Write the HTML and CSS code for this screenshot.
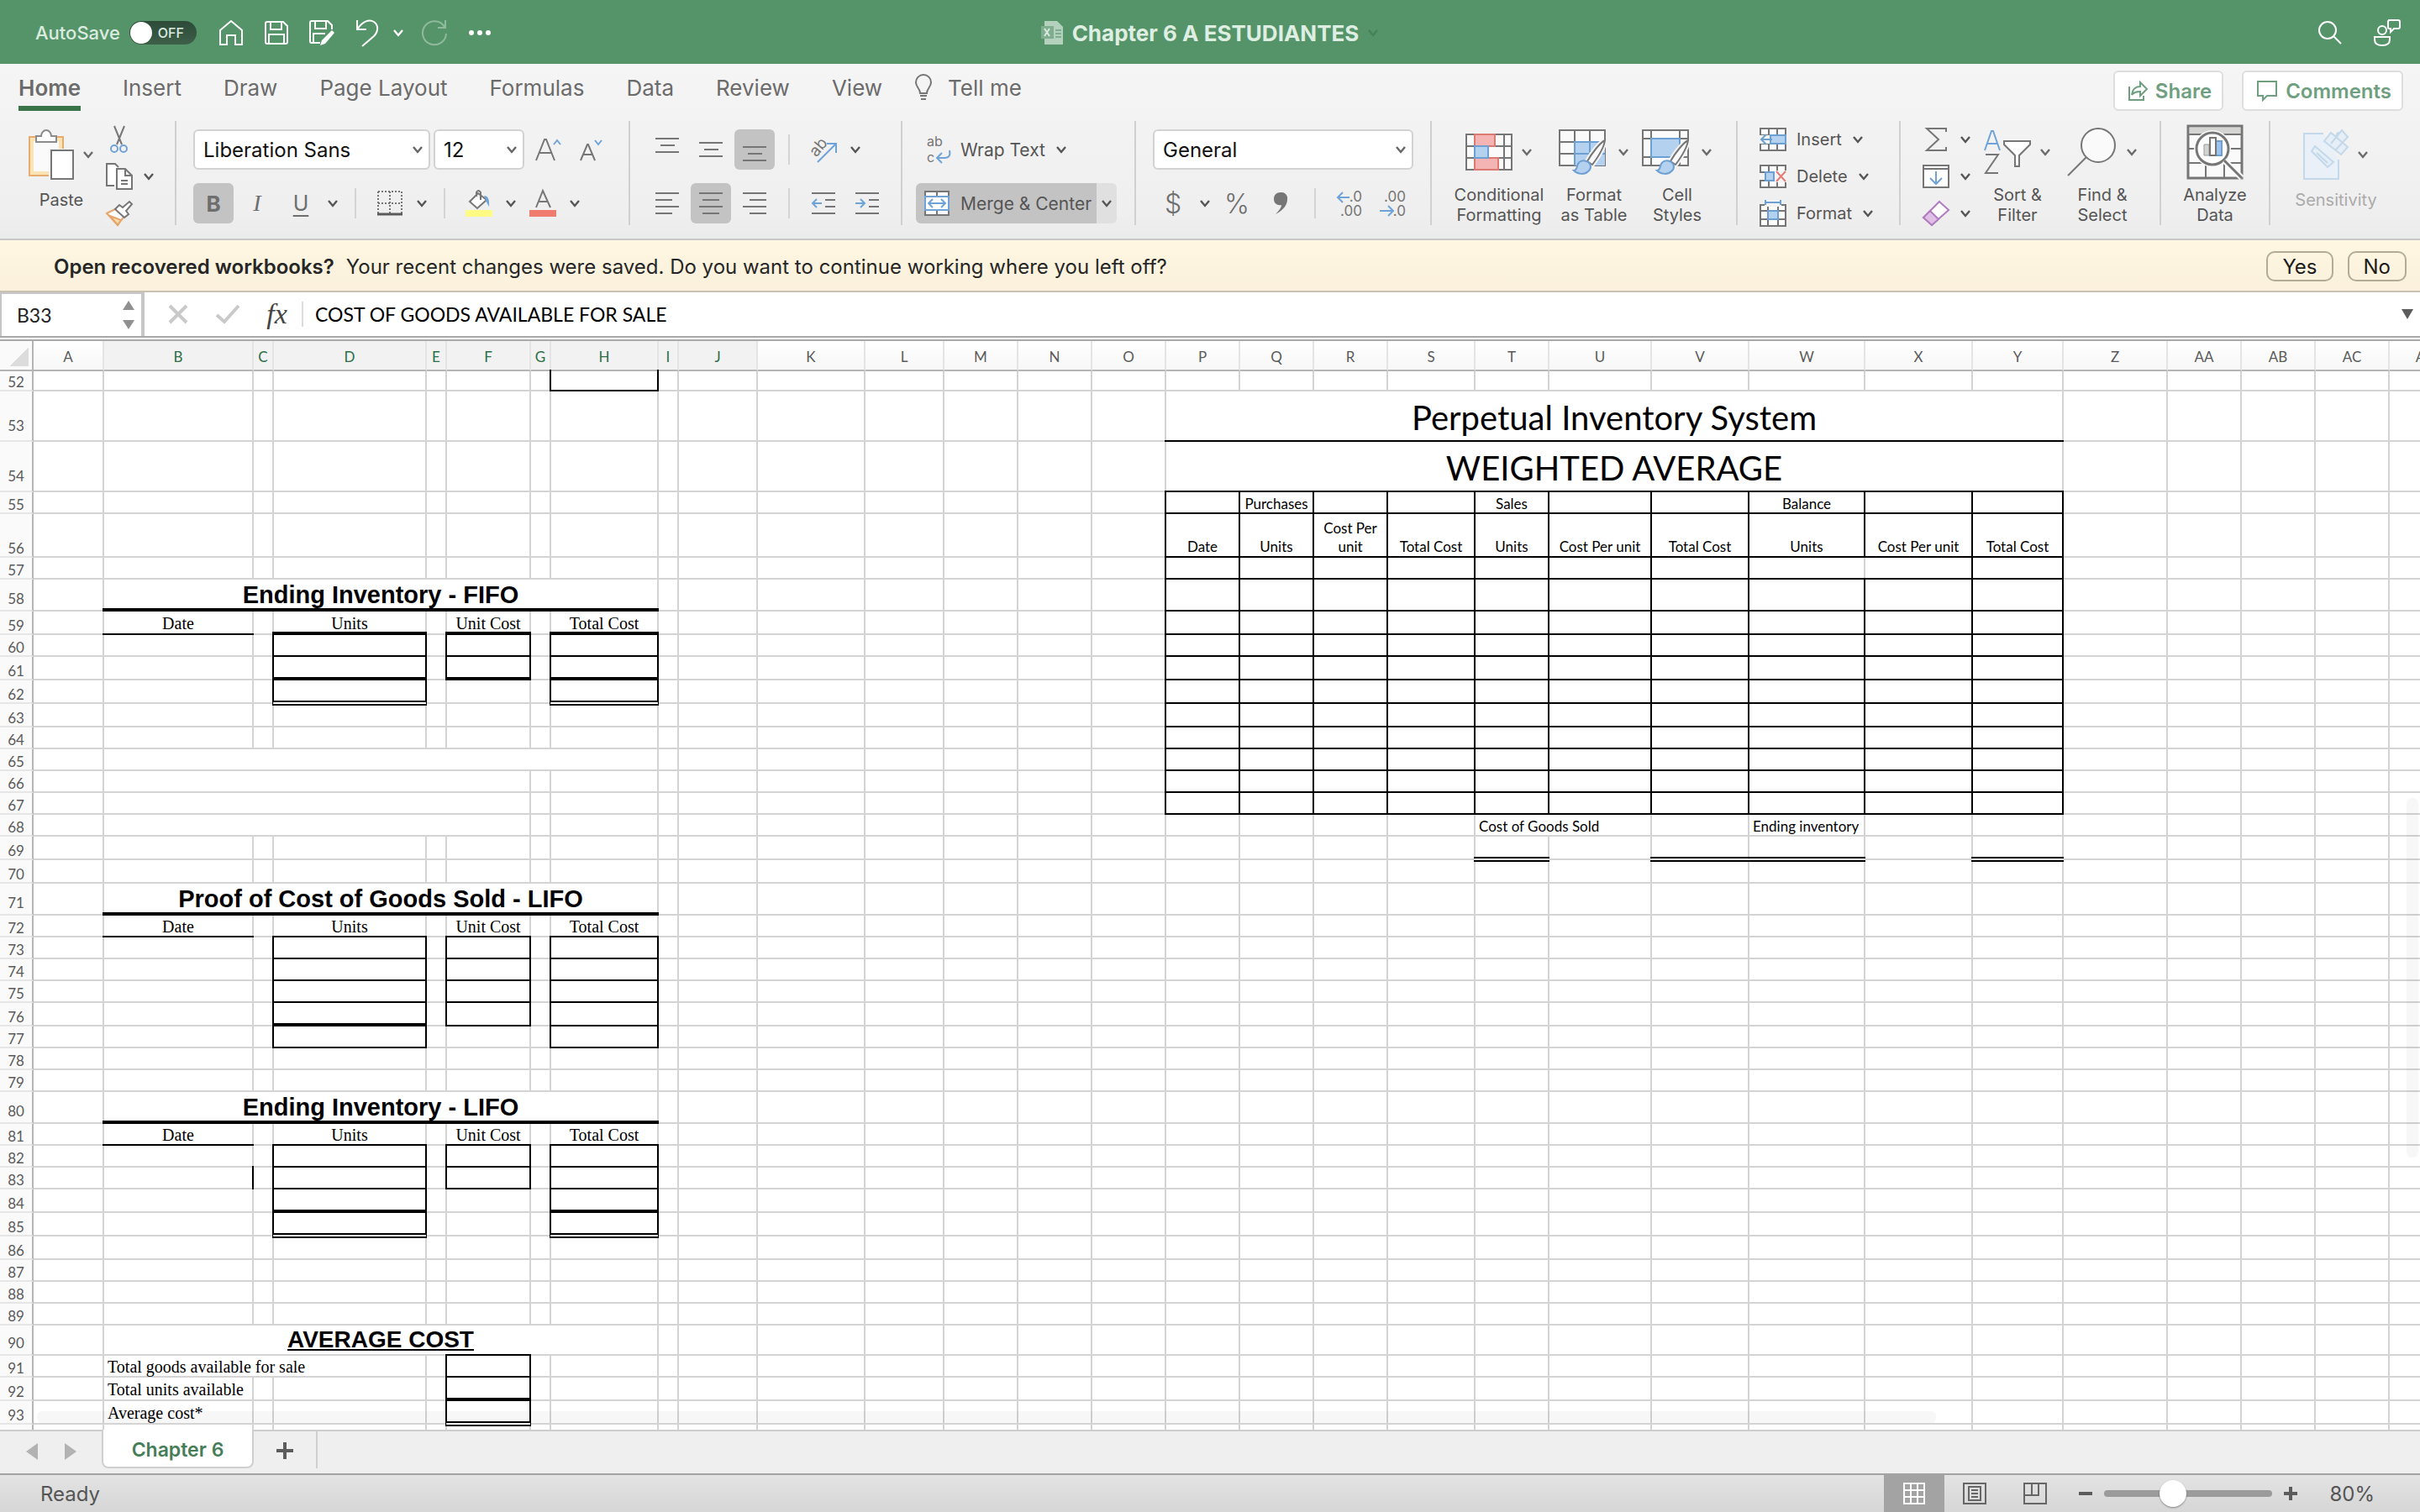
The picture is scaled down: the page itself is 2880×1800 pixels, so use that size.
FILE: index.html
```html
<!DOCTYPE html>
<html lang="en">
<head>
    <meta charset="UTF-8">
    <meta name="viewport" content="width=device-width, initial-scale=1.0">
    <title>Chapter 6 A ESTUDIANTES</title>
    <link rel="stylesheet" href="styles.css">
</head>
<body>
    <svg class="defs" aria-hidden="true">
        <symbol id="chev" viewBox="0 0 14 10"><path d="M2 2l5 6 5-6" fill="none" stroke="currentColor" stroke-width="2.4"/></symbol>
        <symbol id="brush" viewBox="0 0 40 42">
            <path d="M38 1c-6 3-16 16-21 25l6 4C29 22 37 9 38 1z" fill="#fafafa" stroke="#f4f4f4" stroke-width="6"/>
            <path d="M38 1c-6 3-16 16-21 25l6 4C29 22 37 9 38 1z" fill="#fafafa" stroke="#767676" stroke-width="2"/>
            <path d="M1 37c4 0 3-4 5-8 2-4 8-5 12-2s4 8 0 11c-4 4-12 4-17-1z" fill="#b4d2f0" stroke="#6c9fd2" stroke-width="2"/>
        </symbol>
    </svg>

    <header class="titlebar">
        <div class="quick">
            <label class="autosave" for="autosave">AutoSave
                <span class="switch"><input type="checkbox" id="autosave"><span class="switch-text">OFF</span></span>
            </label>
            <button class="qbtn" aria-label="Home"><svg width="30" height="32" viewBox="0 0 30 32"><path d="M2 13L15 2l13 11v17h-8V19h-10v11H2z"/></svg></button>
            <button class="qbtn" aria-label="Save"><svg width="30" height="30" viewBox="0 0 30 30"><path d="M2 4q0-2 2-2h19l5 5v19q0 2-2 2H4q-2 0-2-2zM8 2v9h13V2M6 28V17h18v11"/></svg></button>
            <button class="qbtn" aria-label="Save as"><svg width="32" height="32" viewBox="0 0 32 32"><path d="M14 28H4q-2 0-2-2V4q0-2 2-2h19l5 5v5M8 2v9h13V2M6 28V17h14"/><path class="solid" d="M28 13l3 3-11 13-6 2 2-6z"/></svg></button>
            <button class="qbtn" aria-label="Undo"><svg width="28" height="34" viewBox="0 0 28 34"><path d="M2 2v11h11M2 13C8 4 16 0 22 4s5 12 0 17L8 33"/></svg></button>
            <button class="qchev" aria-label="Undo history"><svg width="14" height="10"><use href="#chev"/></svg></button>
            <button class="qbtn faded" aria-label="Redo"><svg width="32" height="34" viewBox="0 0 32 34"><path d="M29 2v9h-9M28 10A14 14 0 1 0 30 18"/></svg></button>
            <button class="qbtn" aria-label="More"><svg width="28" height="8" viewBox="0 0 28 8"><path class="solid" d="M1 4a3 3 0 1 1 6 0 3 3 0 1 1-6 0M11 4a3 3 0 1 1 6 0 3 3 0 1 1-6 0M21 4a3 3 0 1 1 6 0 3 3 0 1 1-6 0"/></svg></button>
        </div>
        <div class="doc-title">
            <svg width="27" height="30" viewBox="0 0 27 30"><path d="M4 1h15l7 7v21H4z" fill="#b4d1bd"/><path d="M0 7h15v15H0z" fill="#7fae8e"/><path d="M4 10l6 9M10 10l-6 9" stroke="#d8e8dd" stroke-width="2"/><path d="M17 12h7M17 16h7M17 20h7" stroke="#7fae8e" stroke-width="2"/></svg>
            <span>Chapter 6 A ESTUDIANTES</span>
            <svg class="title-chev" width="14" height="10"><use href="#chev"/></svg>
        </div>
        <div class="title-right">
            <button class="qbtn" aria-label="Search"><svg width="30" height="30" viewBox="0 0 30 30"><circle cx="12" cy="12" r="10"/><path d="M19 19l9 9"/></svg></button>
            <button class="qbtn" aria-label="Share presence"><svg width="34" height="34" viewBox="0 0 34 34"><circle cx="11" cy="14" r="5"/><path d="M2 22h18v3q0 7-9 7t-9-7zM18 2h12q2 0 2 2v6q0 2-2 2h-5l-4 4v-4h-2q-1 0-1-2V4q0-2 2-2z"/></svg></button>
        </div>
    </header>

    <section class="ribbon">
        <nav class="tabs">
            <div class="tab-list">
                <button class="tab active">Home</button>
                <button class="tab">Insert</button>
                <button class="tab">Draw</button>
                <button class="tab">Page Layout</button>
                <button class="tab">Formulas</button>
                <button class="tab">Data</button>
                <button class="tab">Review</button>
                <button class="tab">View</button>
                <button class="tab tell"><svg width="22" height="32" viewBox="0 0 22 32"><path d="M7 23C7 17 2 16 2 10a9 9 0 0 1 18 0c0 6-5 7-5 13zM7 26h8M8 30h6" fill="none" stroke="#767676" stroke-width="2"/></svg>Tell me</button>
            </div>
            <div class="tab-actions">
                <button class="pill"><svg width="24" height="26" viewBox="0 0 24 26"><path d="M2 8v16h17v-5M5 18c1-7 5-10 10-10V3l8 8-8 8v-5c-5 0-8 1-10 4z"/></svg>Share</button>
                <button class="pill"><svg width="26" height="26" viewBox="0 0 26 26"><path d="M2 2h22v17H13l-5 5v-5H2z"/></svg>Comments</button>
            </div>
        </nav>

        <div class="toolbar">
            <div class="group g-clip">
                <button class="big">
                    <span class="big-icon">
                        <svg width="54" height="60" viewBox="0 0 54 60"><path d="M1 9h40v46H1z" fill="#fbe3b6" stroke="#e6ac70" stroke-width="2"/><path d="M6 14h30v36H6z" fill="#fafafa"/><path d="M9 15V8h6a6 7 0 0 1 12 0h6v7z" fill="#fff" stroke="#8b8b8b" stroke-width="2"/><path d="M24 23h32v38H24z" fill="#f3f3f3"/><path d="M27 25h26v34H27z" fill="#fff" stroke="#767676" stroke-width="2"/></svg>
                        <svg width="14" height="10"><use href="#chev"/></svg>
                    </span>
                    <span>Paste</span>
                </button>
                <div class="stack">
                    <button class="mini" aria-label="Cut"><svg width="32" height="32" viewBox="0 0 32 32"><path d="M10 0l9 22M22 0l-9 22" fill="none" stroke="#767676" stroke-width="2"/><circle cx="10" cy="27" r="4" fill="none" stroke="#6fa3d8" stroke-width="2"/><circle cx="21" cy="27" r="4" fill="none" stroke="#6fa3d8" stroke-width="2"/></svg></button>
                    <button class="mini" aria-label="Copy"><svg width="32" height="32" viewBox="0 0 32 32"><path d="M10 27H1V1h10l4 4" fill="#fff" stroke="#767676" stroke-width="2"/><path d="M13 7h10l8 8v16H13zM23 7v8h8M18 21h8M18 25h8" fill="#fff" stroke="#767676" stroke-width="2"/></svg><svg width="14" height="10"><use href="#chev"/></svg></button>
                    <button class="mini" aria-label="Format painter"><svg width="32" height="30" viewBox="0 0 32 30"><path d="M1 15l12-6 9 9-8 11z" fill="#fff" stroke="#e6a56a" stroke-width="2"/><path d="M5 18l13 5-4 6z" fill="#fbdca8" stroke="#e6a56a" stroke-width="2"/><path d="M11 10l5-5 4 3 8-7 3 3-7 8 3 4-5 4z" fill="#fff" stroke="#767676" stroke-width="2"/></svg></button>
                </div>
            </div>

            <div class="group g-font rows">
                <div class="row">
                    <select class="font-name" aria-label="Font"><option>Liberation Sans</option></select>
                    <select class="font-size" aria-label="Font size"><option>12</option></select>
                    <button class="tool" aria-label="Increase font size"><svg width="30" height="28" viewBox="0 0 30 28"><path d="M1 27L11 2h2l10 25M5 18h14" fill="none" stroke="#767676" stroke-width="2"/><path d="M22 8l4-5 4 5" fill="none" stroke="#6fa3d8" stroke-width="2"/></svg></button>
                    <button class="tool" aria-label="Decrease font size"><svg width="28" height="28" viewBox="0 0 28 28"><path d="M1 27L9 8h1l8 19M4 20h11" fill="none" stroke="#767676" stroke-width="2"/><path d="M18 3l4 5 4-5" fill="none" stroke="#6fa3d8" stroke-width="2"/></svg></button>
                </div>
                <div class="row">
                    <button class="tool on bold">B</button>
                    <button class="tool italic">I</button>
                    <button class="tool underline">U</button>
                    <button class="chev" aria-label="Underline style"><svg width="14" height="10"><use href="#chev"/></svg></button>
                    <i class="sep"></i>
                    <button class="tool" aria-label="Borders"><svg width="30" height="30" viewBox="0 0 30 30"><path d="M1 1h28M1 15h28M1 1v26M15 1v26M29 1v26" fill="none" stroke="#767676" stroke-width="2" stroke-dasharray="2 2"/><path d="M0 28h30" stroke="#5a5a5a" stroke-width="3"/></svg></button>
                    <button class="chev" aria-label="Border style"><svg width="14" height="10"><use href="#chev"/></svg></button>
                    <i class="sep"></i>
                    <button class="tool" aria-label="Fill color"><svg width="32" height="32" viewBox="0 0 32 32"><path d="M0 24h32v8H0z" fill="#fefb84"/><path d="M15 4L5 14l9 8 11-10zM13 8V3q2-4 5 0v9" fill="#fff" stroke="#767676" stroke-width="2"/><path d="M22 7q7 0 6 13-3-5-4-8z" fill="#6fa3d8"/></svg></button>
                    <button class="chev" aria-label="Fill colors"><svg width="14" height="10"><use href="#chev"/></svg></button>
                    <button class="tool" aria-label="Font color"><svg width="32" height="32" viewBox="0 0 32 32"><path d="M0 24h32v8H0z" fill="#f07c70"/><path d="M8 21L16 1l9 20M11 14h11" fill="none" stroke="#767676" stroke-width="2"/></svg></button>
                    <button class="chev" aria-label="Font colors"><svg width="14" height="10"><use href="#chev"/></svg></button>
                </div>
            </div>

            <div class="group g-align rows">
                <div class="row">
                    <button class="tool" aria-label="Top align"><svg class="ln" width="28" height="28" viewBox="0 0 28 28"><path d="M0 1h28M6 9h17M0 17h28"/></svg></button>
                    <button class="tool" aria-label="Middle align"><svg class="ln" width="28" height="28" viewBox="0 0 28 28"><path d="M0 6h28M6 14h17M0 22h28"/></svg></button>
                    <button class="tool on" aria-label="Bottom align"><svg class="ln" width="28" height="28" viewBox="0 0 28 28"><path d="M0 11h28M6 19h17M0 27h28"/></svg></button>
                    <i class="sep"></i>
                    <button class="tool" aria-label="Orientation"><svg width="34" height="32" viewBox="0 0 34 32"><text x="4" y="24" transform="rotate(-50 8 20)" font-family="Inter" font-size="19" fill="#767676">ab</text><path d="M10 31L31 10M21 9h11v11" fill="none" stroke="#6fa3d8" stroke-width="2"/></svg></button>
                    <button class="chev" aria-label="Orientation options"><svg width="14" height="10"><use href="#chev"/></svg></button>
                </div>
                <div class="row">
                    <button class="tool" aria-label="Align left"><svg class="ln" width="28" height="28" viewBox="0 0 28 28"><path d="M0 2h28M0 10h20M0 18h28M0 26h20"/></svg></button>
                    <button class="tool on" aria-label="Center"><svg class="ln" width="28" height="28" viewBox="0 0 28 28"><path d="M0 2h28M4 10h20M0 18h28M4 26h20"/></svg></button>
                    <button class="tool" aria-label="Align right"><svg class="ln" width="28" height="28" viewBox="0 0 28 28"><path d="M0 2h28M8 10h20M0 18h28M8 26h20"/></svg></button>
                    <i class="sep"></i>
                    <button class="tool" aria-label="Decrease indent"><svg class="ln" width="28" height="28" viewBox="0 0 28 28"><path d="M0 2h28M16 10h12M16 18h12M0 26h28"/><path class="blue" d="M12 14H1M6 9l-5 5 5 5"/></svg></button>
                    <button class="tool" aria-label="Increase indent"><svg class="ln" width="28" height="28" viewBox="0 0 28 28"><path d="M0 2h28M16 10h12M16 18h12M0 26h28"/><path class="blue" d="M0 14h11M6 9l5 5-5 5"/></svg></button>
                </div>
            </div>

            <div class="group g-wrap rows">
                <div class="row tight">
                    <button class="tool wide"><svg width="32" height="32" viewBox="0 0 32 32"><text font-family="Inter" font-size="16" fill="#767676"><tspan x="4" y="12">ab</tspan><tspan x="4" y="31">c</tspan></text><path d="M31 17q2 9-6 9H17M22 20l-6 6 6 6" fill="none" stroke="#6fa3d8" stroke-width="2"/></svg>Wrap Text<svg width="14" height="10"><use href="#chev"/></svg></button>
                </div>
                <div class="row tight">
                    <button class="tool wide on merge"><svg width="32" height="32" viewBox="0 0 32 32"><path d="M2 2h28v28H2zM16 2v6M16 24v6" fill="#fafafa" stroke="#767676" stroke-width="2"/><path d="M2 8h28v16H2z" fill="#fff" stroke="#6fa3d8" stroke-width="2"/><path d="M6 16h20M11 11l-5 5 5 5M21 11l5 5-5 5" fill="none" stroke="#6fa3d8" stroke-width="2"/></svg>Merge &amp; Center</button>
                    <button class="chev merge-chev" aria-label="Merge options"><svg width="14" height="10"><use href="#chev"/></svg></button>
                </div>
            </div>

            <div class="group g-num rows">
                <div class="row">
                    <select class="num-format" aria-label="Number format"><option>General</option></select>
                </div>
                <div class="row">
                    <button class="tool sign">$</button>
                    <button class="chev" aria-label="Currency"><svg width="14" height="10"><use href="#chev"/></svg></button>
                    <button class="tool sign">%</button>
                    <button class="tool" aria-label="Comma style"><svg width="16" height="26" viewBox="0 0 16 26"><path d="M8 0a7 7 0 0 1 8 8c0 8-6 14-14 18 4-4 7-8 7-11-5 1-9-2-9-7 0-5 3-8 8-8z" fill="#767676"/></svg></button>
                    <i class="sep"></i>
                    <button class="tool" aria-label="Increase decimal"><svg width="32" height="32" viewBox="0 0 32 32"><text text-anchor="end" font-family="Inter" font-size="17" fill="#767676"><tspan x="31" y="14">.0</tspan><tspan x="31" y="31">.00</tspan></text><path d="M16 9H2M8 3L2 9l6 6" fill="none" stroke="#6fa3d8" stroke-width="2"/></svg></button>
                    <button class="tool" aria-label="Decrease decimal"><svg width="32" height="32" viewBox="0 0 32 32"><text text-anchor="end" font-family="Inter" font-size="17" fill="#767676"><tspan x="31" y="14">.00</tspan><tspan x="31" y="31">.0</tspan></text><path d="M0 25h16M10 19l6 6-6 6" fill="none" stroke="#6fa3d8" stroke-width="2"/></svg></button>
                </div>
            </div>

            <div class="group g-styles">
                <button class="big w120">
                    <span class="big-icon">
                        <svg width="56" height="44" viewBox="0 0 56 44"><path d="M1 1h54v42H1zM1 15h54M1 29h54M11 1v42M46 1v42" fill="#fafafa" stroke="#767676" stroke-width="2"/><path d="M11 1h24v14H11zM11 29h28v14H11z" fill="#f5b4b4" stroke="#dc7a72" stroke-width="2"/><path d="M11 15h16v14H11z" fill="#b4d2f0" stroke="#6c9fd2" stroke-width="2"/></svg>
                        <svg width="14" height="10"><use href="#chev"/></svg>
                    </span>
                    <span>Conditional<br>Formatting</span>
                </button>
                <button class="big w106">
                    <span class="big-icon">
                        <svg width="60" height="54" viewBox="0 0 60 54"><path d="M1 1h54v42H1z" fill="#fafafa" stroke="#767676" stroke-width="2"/><path d="M19 15h36v28H19z" fill="#b4d2f0"/><path d="M1 15h18M1 29h18M19 1v14M37 1v14" stroke="#767676" stroke-width="2"/><path d="M19 43V15h36M19 29h36M37 15v28" fill="none" stroke="#6c9fd2" stroke-width="2"/><svg x="15" y="12" width="44" height="42"><use href="#brush"/></svg></svg>
                        <svg width="14" height="10"><use href="#chev"/></svg>
                    </span>
                    <span>Format<br>as Table</span>
                </button>
                <button class="big w92">
                    <span class="big-icon">
                        <svg width="60" height="54" viewBox="0 0 60 54"><path d="M1 1h54v42H1z" fill="#fafafa" stroke="#767676" stroke-width="2"/><path d="M1 11h54M1 33h54M11 1v42M45 1v42" stroke="#767676" stroke-width="2"/><path d="M11 11h34v22H11z" fill="#b4d2f0" stroke="#6c9fd2" stroke-width="2"/><svg x="15" y="12" width="44" height="42"><use href="#brush"/></svg></svg>
                        <svg width="14" height="10"><use href="#chev"/></svg>
                    </span>
                    <span>Cell<br>Styles</span>
                </button>
            </div>

            <div class="group g-cells">
                <div class="stack">
                    <button class="mini"><svg width="32" height="28" viewBox="0 0 32 28"><path d="M1 1h30v26H1zM1 9h30M1 19h30M11 1v26M21 1v26" fill="#fff" stroke="#767676" stroke-width="2"/><path d="M0 9h16v10H0z" fill="#f4f4f4"/><path d="M13 9h18v10H13z" fill="#b4d2f0" stroke="#6c9fd2" stroke-width="2"/><path d="M15 14H2M8 8l-6 6 6 6" fill="none" stroke="#6c9fd2" stroke-width="2"/></svg>Insert<svg width="14" height="10"><use href="#chev"/></svg></button>
                    <button class="mini"><svg width="32" height="28" viewBox="0 0 32 28"><path d="M1 1h30v26H1zM1 9h30M1 19h30M11 1v26M21 1v26" fill="#fff" stroke="#767676" stroke-width="2"/><path d="M0 10h7v8H0zM17 7h16v14H17z" fill="#f4f4f4"/><path d="M7 9h10v10H7z" fill="#b4d2f0" stroke="#6c9fd2" stroke-width="2"/><path d="M20 8l11 12M31 8L20 20" fill="none" stroke="#e37b76" stroke-width="2"/></svg>Delete<svg width="14" height="10"><use href="#chev"/></svg></button>
                    <button class="mini"><svg width="32" height="32" viewBox="0 0 32 32"><path d="M1 6h30v25H1zM1 13h30M1 23h30M10 6v25M22 6v25" fill="#fff" stroke="#767676" stroke-width="2"/><path d="M6 0h20v8H6z" fill="#f4f4f4"/><path d="M10 13h12v10H10z" fill="#b4d2f0" stroke="#6c9fd2" stroke-width="2"/><path d="M7 3h18M7 0v6M25 0v6" fill="none" stroke="#6c9fd2" stroke-width="2"/></svg>Format<svg width="14" height="10"><use href="#chev"/></svg></button>
                </div>
            </div>

            <div class="group g-edit">
                <div class="stack">
                    <button class="mini" aria-label="AutoSum"><svg width="32" height="28" viewBox="0 0 32 28"><path d="M28 5V1H5l14 13L5 27h23v-4" fill="none" stroke="#767676" stroke-width="2"/></svg><svg width="14" height="10"><use href="#chev"/></svg></button>
                    <button class="mini" aria-label="Fill"><svg width="32" height="28" viewBox="0 0 32 28"><path d="M1 1h30v26H1zM1 5h30" fill="#fff" stroke="#767676" stroke-width="2"/><path d="M16 8v14M9 16l7 7 7-7" fill="none" stroke="#6fa3d8" stroke-width="2"/></svg><svg width="14" height="10"><use href="#chev"/></svg></button>
                    <button class="mini" aria-label="Clear"><svg width="32" height="30" viewBox="0 0 32 30"><path d="M20 1l11 10-20 18L1 20z" fill="#fff" stroke="#b07cc0" stroke-width="2"/><path d="M9 12l10 10-8 7L1 20z" fill="#dfbfe6" stroke="#b07cc0" stroke-width="2"/></svg><svg width="14" height="10"><use href="#chev"/></svg></button>
                </div>
                <button class="big w106">
                    <span class="big-icon">
                        <svg width="56" height="54" viewBox="0 0 56 54"><path d="M1 25L9 2h2l8 23M4 17h12" fill="none" stroke="#6fa3d8" stroke-width="2"/><path d="M2 30h15L2 52h15" fill="none" stroke="#767676" stroke-width="2"/><path d="M24 14h31v4L42 31v13h-5V31L24 18z" fill="#fff" stroke="#767676" stroke-width="2"/></svg>
                        <svg width="14" height="10"><use href="#chev"/></svg>
                    </span>
                    <span>Sort &amp;<br>Filter</span>
                </button>
                <button class="big w92">
                    <span class="big-icon">
                        <svg width="60" height="58" viewBox="0 0 60 58"><circle cx="37" cy="21" r="20" fill="#fafafa" stroke="#767676" stroke-width="2"/><path d="M23 35L1 57" stroke="#767676" stroke-width="2"/></svg>
                        <svg width="14" height="10"><use href="#chev"/></svg>
                    </span>
                    <span>Find &amp;<br>Select</span>
                </button>
            </div>

            <div class="group g-data">
                <button class="big">
                    <span class="big-icon">
                        <svg width="66" height="64" viewBox="0 0 66 64"><path d="M1 1h64v62H1z" fill="#fafafa" stroke="#767676" stroke-width="3"/><path d="M3 3h60v8H3z" fill="#d4d4d2"/><path d="M1 11h64M1 28h64M1 45h64M22 45v18M44 45v18" stroke="#767676" stroke-width="2"/><circle cx="30" cy="28" r="22" fill="#fafafa"/><circle cx="30" cy="28" r="19" fill="#fff" stroke="#767676" stroke-width="3"/><path d="M20 23h6v13h-6z" fill="#d4d4d2" stroke="#999"/><path d="M34 19h7v17h-7z" fill="#9cc4ee" stroke="#6c9fd2" stroke-width="2"/><path d="M27 15h7v21h-7z" fill="#fff" stroke="#767676" stroke-width="2"/><path d="M44 42l21 21" stroke="#fafafa" stroke-width="7"/><path d="M44 42l21 21" stroke="#767676" stroke-width="3"/></svg>
                    </span>
                    <span>Analyze<br>Data</span>
                </button>
            </div>

            <div class="group g-sens">
                <button class="big" disabled>
                    <span class="big-icon">
                        <svg width="54" height="60" viewBox="0 0 54 60"><path d="M24 5H1v54h41V36" fill="#e9f0f7" stroke="#c3d8ea" stroke-width="2"/><path d="M10 26l4-6 22 19-7 6zM16 28l13 12M25 14l8-10 20 17-8 9zM33 17L46 1l7 8-14 15M42 3l-4 6" fill="#e6eef6" stroke="#c3d8ea" stroke-width="2"/></svg>
                        <svg width="14" height="10"><use href="#chev"/></svg>
                    </span>
                    <span>Sensitivity</span>
                </button>
            </div>
        </div>
    </section>

    <div class="message">
        <strong>Open recovered workbooks?</strong>
        <span>Your recent changes were saved. Do you want to continue working where you left off?</span>
        <div class="message-actions">
            <button>Yes</button>
            <button>No</button>
        </div>
    </div>

    <div class="formula-bar">
        <div class="name-box">
            <input type="text" value="B33" aria-label="Name box">
            <svg width="14" height="34" viewBox="0 0 14 34"><path d="M7 0l7 11H0zM7 34l7-11H0z" fill="#909090"/></svg>
        </div>
        <button class="fbtn" aria-label="Cancel"><svg width="24" height="24" viewBox="0 0 24 24"><path d="M2 2l20 20M22 2L2 22" stroke="#c9c9c9" stroke-width="4"/></svg></button>
        <button class="fbtn" aria-label="Enter"><svg width="30" height="24" viewBox="0 0 30 24"><path d="M2 13l9 8L28 2" fill="none" stroke="#c9c9c9" stroke-width="4"/></svg></button>
        <button class="fbtn fx">fx</button>
        <input class="formula" type="text" value="COST OF GOODS AVAILABLE FOR SALE" aria-label="Formula">
        <button class="expand" aria-label="Expand formula bar"><svg width="14" height="12" viewBox="0 0 14 12"><path d="M0 0h14L7 12z" fill="#5c5c5c"/></svg></button>
    </div>

    <main class="sheet">
        <table id="grid" class="grid"></table>
        <div class="scroll-v"></div>
        <div class="scroll-h"></div>
    </main>

    <div class="sheet-tabs">
        <div class="arrows">
            <button aria-label="Previous sheet"><svg width="14" height="20" viewBox="0 0 14 20"><path d="M14 0v20L0 10z"/></svg></button>
            <button aria-label="Next sheet"><svg width="14" height="20" viewBox="0 0 14 20"><path d="M0 0v20l14-10z"/></svg></button>
        </div>
        <button class="sheet-tab">Chapter 6</button>
        <button class="add" aria-label="Add sheet"><svg width="20" height="20" viewBox="0 0 20 20"><path d="M10 0v20M0 10h20" stroke="#5c5c5c" stroke-width="4"/></svg></button>
    </div>

    <footer class="status">
        <span>Ready</span>
        <div class="views">
            <button class="on" aria-label="Normal view"><svg width="26" height="26" viewBox="0 0 26 26"><path d="M1 1h24v24H1zM1 9h24M1 17h24M9 1v24M17 1v24" fill="none" stroke="#fff" stroke-width="2"/></svg></button>
            <button aria-label="Page layout view"><svg width="28" height="26" viewBox="0 0 28 26"><path d="M1 1h26v24H1zM7 5h14v16H7zM10 9h8M10 13h8M10 17h8" fill="none" stroke="#666" stroke-width="2"/></svg></button>
            <button aria-label="Page break view"><svg width="28" height="26" viewBox="0 0 28 26"><path d="M1 1h26v24H1zM1 15h17V1M10 1v14" fill="none" stroke="#666" stroke-width="2"/></svg></button>
        </div>
        <div class="zoom">
            <button aria-label="Zoom out"><svg width="16" height="16" viewBox="0 0 16 16"><path d="M0 8h16" stroke="#5c5c5c" stroke-width="4"/></svg></button>
            <input type="range" min="0" max="100" value="39" aria-label="Zoom">
            <button aria-label="Zoom in"><svg width="16" height="16" viewBox="0 0 16 16"><path d="M8 0v16M0 8h16" stroke="#5c5c5c" stroke-width="4"/></svg></button>
        </div>
        <span class="percent">80%</span>
    </footer>

    <script src="script.js"></script>
</body>
</html>
```

FILE: styles.css
```css
* {
    box-sizing: border-box;
}
body {
    margin: 0;
    height: 100vh;
    display: flex;
    flex-direction: column;
    overflow: hidden;
    font-family: Inter, "Liberation Sans", sans-serif;
    font-size: 20px;
    color: #555;
    background: #fff;
}
button, input, select {
    font: inherit;
    color: inherit;
    margin: 0;
}
button {
    padding: 0;
    border: none;
    background: none;
    display: flex;
    align-items: center;
    justify-content: center;
}
svg {
    flex: none;
    overflow: visible;
}
.defs {
    position: absolute;
    width: 0;
    height: 0;
}

/* title bar */
.titlebar {
    height: 76px;
    padding: 2px 12px 0;
    display: grid;
    grid-template-columns: 1fr auto 1fr;
    align-items: center;
    background: #549468;
    color: #fff;
}
.quick, .title-right, .doc-title {
    display: flex;
    align-items: center;
}
.quick {
    padding-left: 30px;
}
.autosave {
    display: flex;
    align-items: center;
    gap: 11px;
    font-size: 22px;
    font-weight: 500;
    color: #dcebe0;
    margin-right: 14px;
}
.switch {
    display: grid;
    align-items: center;
}
.switch input, .switch-text {
    grid-area: 1 / 1;
}
.switch input {
    appearance: none;
    width: 80px;
    height: 28px;
    border-radius: 14px;
    background: linear-gradient(#2c4a37, #3e5f4a);
}
.switch input::before {
    content: "";
    display: block;
    width: 26px;
    height: 26px;
    margin: 1px;
    border-radius: 50%;
    background: #fff;
}
.switch-text {
    justify-self: end;
    margin-right: 15px;
    font-size: 16px;
}
.qbtn {
    width: 54px;
    height: 40px;
}
.qbtn svg {
    fill: none;
    stroke: #fff;
    stroke-width: 2;
}
.qbtn .solid {
    fill: #fff;
    stroke: none;
}
.qchev {
    width: 20px;
}
.faded {
    opacity: 0.35;
    margin-left: 6px;
}
.doc-title {
    gap: 10px;
    font-size: 26px;
    font-weight: 700;
    color: #dfeee3;
}
.title-chev {
    color: #45805a;
}
.title-right {
    justify-content: flex-end;
    gap: 14px;
}

/* ribbon */
.ribbon {
    background: linear-gradient(#f6f5f5, #efefef 85%, #ebebeb);
    border-bottom: 2px solid #c8c7c7;
    padding-bottom: 16px;
}
.tabs {
    height: 68px;
    padding: 0 20px 0 22px;
    display: flex;
    justify-content: space-between;
    align-items: flex-start;
}
.tab-list {
    display: flex;
    gap: 50px;
}
.tab {
    height: 56px;
    padding-top: 6px;
    font-size: 26px;
    color: #6b6b6b;
    border-bottom: 6px solid transparent;
}
.tab.active {
    font-weight: 600;
    border-color: #3a7249;
}
.tell {
    gap: 18px;
    margin-left: -12px;
}
.tab-actions {
    display: flex;
    gap: 22px;
    padding-top: 8px;
}
.pill {
    height: 48px;
    padding: 0 12px 0 15px;
    gap: 9px;
    border: 2px solid #dedede;
    border-radius: 6px;
    background: #fff;
    color: #6f9f80;
    font-size: 24px;
    font-weight: 600;
}
.pill svg {
    fill: none;
    stroke: #6f9f80;
    stroke-width: 2;
}
.toolbar {
    display: flex;
    color: #555;
}
.group {
    display: flex;
    height: 124px;
    border-right: 2px solid #d0d0d0;
}
.rows {
    flex-direction: column;
    gap: 16px;
    padding-top: 10px;
}
.row {
    display: flex;
    align-items: center;
    gap: 4px;
}
.row.tight {
    gap: 0;
}
.g-clip { width: 210px; padding-left: 34px; gap: 14px; }
.g-font { width: 540px; padding-left: 20px; }
.g-align { width: 324px; padding-left: 20px; }
.g-wrap { width: 278px; padding-left: 16px; }
.g-num { width: 352px; padding-left: 20px; }
.g-styles { width: 364px; padding-left: 20px; }
.g-cells { width: 194px; padding-left: 26px; }
.g-edit { width: 310px; padding-left: 26px; gap: 2px; }
.g-data { width: 130px; justify-content: center; }
.g-sens { width: 156px; justify-content: center; border: none; }
.w92 { width: 92px; }
.w106 { width: 106px; }
.w120 { width: 120px; }

.big {
    flex: none;
    flex-direction: column;
    justify-content: flex-start;
    line-height: 24px;
}
.big:disabled {
    color: #ababab;
}
.big-icon {
    height: 80px;
    margin-bottom: 2px;
    display: flex;
    align-items: center;
    gap: 10px;
    color: #6a6a6a;
}
.stack {
    display: flex;
    flex-direction: column;
    align-items: flex-start;
}
.mini {
    flex: none;
    height: 44px;
    gap: 12px;
}
.tool {
    flex: none;
    width: 48px;
    height: 48px;
    border-radius: 6px;
    color: #6e6e6e;
}
.tool.on {
    background: #c3c3c3;
}
.chev {
    width: 20px;
    height: 48px;
}
.sep {
    width: 2px;
    height: 36px;
    margin: 0 12px;
    background: #d4d4d4;
}
.ln {
    fill: none;
    stroke: #767676;
    stroke-width: 2;
}
.ln .blue {
    stroke: #6fa3d8;
}
.bold {
    font-size: 26px;
    font-weight: 700;
}
.italic {
    font: italic 28px "Liberation Serif", serif;
}
.underline {
    font-size: 25px;
    text-decoration: underline;
    text-underline-offset: 5px;
}
.sign {
    font-size: 32px;
    font-weight: 300;
}
.tool.wide {
    width: auto;
    padding: 0 6px 0 9px;
    gap: 12px;
    font-size: 21px;
    color: #555;
}
.tool.merge {
    border-radius: 6px 0 0 6px;
}
.merge-chev {
    width: 24px;
    background: #e0e0e0;
    border-radius: 0 6px 6px 0;
}
select {
    appearance: none;
    height: 48px;
    padding: 0 10px;
    border: 2px solid #d2d2d2;
    border-radius: 6px;
    color: #111;
    font-size: 24px;
    background: #fff url("data:image/svg+xml,%3Csvg xmlns='http://www.w3.org/2000/svg' width='14' height='10'%3E%3Cpath d='M2 2l5 6 5-6' fill='none' stroke='%23666' stroke-width='2.4'/%3E%3C/svg%3E") no-repeat right 6px center;
}
.font-name { width: 282px; }
.font-size { width: 108px; }
.num-format { width: 310px; }

/* recovered workbooks message */
.message {
    height: 62px;
    display: flex;
    align-items: center;
    gap: 14px;
    padding: 2px 16px 0 64px;
    background: linear-gradient(#fff7e1, #faf0dc);
    border-bottom: 2px solid #c9c2b2;
    font-size: 24px;
    color: #262626;
}
.message strong {
    font-weight: 600;
}
.message-actions {
    margin-left: auto;
    display: flex;
    gap: 17px;
}
.message-actions button {
    height: 36px;
    padding: 0 17px;
    border: 2px solid #b3aa97;
    border-radius: 10px;
    color: #1c1c1c;
}

/* formula bar */
.formula-bar {
    height: 58px;
    display: flex;
    align-items: center;
    border-bottom: 6px double #a9a9a9;
    font-family: Lato, sans-serif;
    color: #222;
}
.name-box {
    width: 172px;
    height: 100%;
    padding: 0 8px 0 18px;
    display: flex;
    align-items: center;
    justify-content: space-between;
    border: 2px solid #c6c6c6;
    border-width: 2px 4px 0 2px;
    margin-right: 10px;
}
.formula-bar input {
    border: none;
    padding: 0;
    background: none;
    outline: none;
    font-size: 23px;
}
.name-box input {
    width: 100px;
}
.fbtn {
    width: 59px;
    height: 48px;
}
.fx {
    font: italic 34px "Liberation Serif", serif;
    color: #444;
}
.formula-bar .formula {
    flex: 1;
    padding-left: 14px;
    border-left: 2px solid #dcdcdc;
    height: 30px;
    color: #000;
}
.expand {
    width: 30px;
}

/* sheet */
.sheet {
    flex: 1;
    min-height: 0;
    position: relative;
    overflow: hidden;
    font-family: Lato, sans-serif;
    color: #000;
}
.grid {
    width: max-content;
    table-layout: fixed;
    border-collapse: separate;
    border-spacing: 0;
    font-size: 17px;
    line-height: 18px;
}
.grid th {
    padding: 0;
    font-weight: 400;
    color: #5a5a5a;
}
.grid thead th {
    height: 36px;
    padding: 4px 0 0;
    border-right: 2px solid #e4e4e4;
    border-bottom: 2px solid #b5b5b5;
    background: linear-gradient(#fff, #f7f7f7);
}
.grid thead th.sel {
    background: #f2f2f2;
    color: #2c6e45;
}
.grid thead th.corner {
    border-right-color: #b5b5b5;
    background: linear-gradient(135deg, transparent 50%, #dcdcdc 50%) 12px 8px / 22px 22px no-repeat #fafafa;
}
.grid tbody th {
    vertical-align: bottom;
    border-right: 2px solid #b5b5b5;
    border-bottom: 2px solid #e6e6e6;
    background: #fafafa;
}
.grid .title-row th {
    padding-bottom: 4px;
}
.grid .tall-row th {
    padding-bottom: 8px;
}
.grid td {
    position: relative;
    padding: 4px 0 0;
    text-align: center;
    vertical-align: middle;
    white-space: nowrap;
    border-right: 2px solid #d4d4d4;
    border-bottom: 2px solid #d4d4d4;
}
/* black cell edges lie over the grid lines on all four sides */
.grid td.edge::after {
    content: "";
    position: absolute;
    z-index: 1;
    inset: -2px;
    border: 0 solid #000;
}
.grid td.t::after { border-top-width: 2px; }
.grid td.l::after { border-left-width: 2px; }
.grid td.r::after { border-right-width: 2px; }
.grid td.b::after { border-bottom-width: 2px; }
.grid td.thick::after { border-bottom-width: 4px; }
.grid td.double { border-bottom-color: #fff; }
.grid td.double::after {
    bottom: -4px;
    border-bottom: 6px double #000;
}
.grid td.times {
    padding-top: 2px;
    font-family: "Liberation Serif", serif;
    font-size: 20px;
    line-height: 20px;
}
.grid td.heading {
    padding-top: 0;
    font-family: "Liberation Sans", sans-serif;
    font-size: 29px;
    font-weight: 700;
    line-height: 32px;
}
.grid td.under {
    font-size: 28px;
    text-decoration: underline;
}
.grid td.system {
    font-size: 40px;
    line-height: 48px;
}
.grid td.left {
    text-align: left;
    padding-left: 4px;
}
.grid td.low {
    padding-top: 2px;
    vertical-align: bottom;
    white-space: normal;
    line-height: 22px;
}
.scroll-v, .scroll-h {
    position: absolute;
    border-radius: 6px;
    background: rgba(0, 0, 0, 0.03);
}
.scroll-v {
    right: 2px;
    top: 42%;
    width: 14px;
    height: 33%;
}
.scroll-h {
    left: 44px;
    right: 20%;
    bottom: 8px;
    height: 14px;
}

/* sheet tabs */
.sheet-tabs {
    height: 54px;
    display: flex;
    align-items: flex-start;
    background: #efefef;
    border-top: 2px solid #cdcdcd;
    border-bottom: 2px solid #a3a3a3;
}
.arrows {
    width: 121px;
    height: 48px;
    padding-left: 31px;
    display: flex;
    align-items: center;
    gap: 32px;
    fill: #b2b2b2;
}
.sheet-tab {
    position: relative;
    height: 46px;
    width: 181px;
    margin-top: -2px;
    padding-top: 4px;
    background: #fff;
    border: 2px solid #cfcfcf;
    border-top: none;
    border-radius: 0 0 8px 8px;
    color: #457d57;
    font-size: 23px;
    font-weight: 600;
}
.add {
    width: 76px;
    height: 44px;
    padding-top: 2px;
    border-right: 2px solid #cfcfcf;
}

/* status bar */
.status {
    height: 44px;
    display: flex;
    align-items: center;
    padding: 0 54px 0 48px;
    background: linear-gradient(#e3e3e3, #d6d6d6);
    font-size: 24px;
}
.views {
    margin-left: auto;
    display: flex;
    height: 100%;
}
.views button {
    width: 72px;
}
.views .on {
    background: #a3a3a3;
}
.zoom {
    display: flex;
    align-items: center;
    gap: 14px;
    margin-left: 16px;
}
.zoom input {
    appearance: none;
    width: 200px;
    height: 8px;
    border-radius: 4px;
    background: #9b9b9b;
}
.zoom input::-webkit-slider-thumb {
    appearance: none;
    width: 32px;
    height: 32px;
    border-radius: 50%;
    background: #fff;
    box-shadow: 0 1px 2px rgba(0, 0, 0, 0.4);
}
.percent {
    margin-left: 38px;
}
```

FILE: script.js
```js
const columns = [
    ['A', 84], ['B', 178], ['C', 24], ['D', 182], ['E', 24], ['F', 100], ['G', 24], ['H', 128], ['I', 24], ['J', 94],
    ['K', 128], ['L', 94], ['M', 88], ['N', 88], ['O', 88], ['P', 88], ['Q', 88], ['R', 88], ['S', 104], ['T', 88],
    ['U', 122], ['V', 116], ['W', 138], ['X', 128], ['Y', 108], ['Z', 124], ['AA', 88], ['AB', 88], ['AC', 88], ['AD', 88]
];
const firstRow = 52;
const rowHeights = [
    24, 60, 60, 26, 52, 26, 38, 28, 26, 28, 28, 28, 26, 26, 26, 26, 26, 28, 28, 38, 26, 26,
    26, 26, 28, 26, 26, 26, 38, 26, 26, 26, 28, 28, 28, 26, 26, 26, 36, 26, 28, 28
];

const cells = {};
function cell(ref) {
    if (!cells[ref]) cells[ref] = { text: '', cls: [], span: 1 };
    return cells[ref];
}
function put(ref, text, cls, span) {
    const c = cell(ref);
    c.text = text;
    c.cls.push(...cls.split(' '));
    c.span = span || 1;
}
function edges(cols, rows, sides) {
    cols.split(' ').forEach(col => rows.forEach(row => {
        cell(col + row).cls.push('edge', ...sides.split(' '));
    }));
}

// inventory tables on the left
[[58, 'Ending Inventory - FIFO'], [71, 'Proof of Cost of Goods Sold - LIFO'], [80, 'Ending Inventory - LIFO']].forEach(([row, title]) => {
    put('B' + row, title, 'heading edge thick', 7);
    put('B' + (row + 1), 'Date', 'times edge b');
    put('D' + (row + 1), 'Units', 'times');
    put('F' + (row + 1), 'Unit Cost', 'times');
    put('H' + (row + 1), 'Total Cost', 'times');
});
edges('H', [52], 'l r b');
edges('D F H', [59], 'thick');
edges('D F H', [60], 'l r b');
edges('D F H', [61], 'l r thick');
edges('D H', [62], 'l r double');
edges('D F H', [72, 81], 'b');
edges('D F H', [73, 74, 75, 82, 83], 'l r b');
edges('D', [76], 'l r thick');
edges('F H', [76], 'l r b');
edges('D H', [77], 'l r b');
edges('B', [83], 'r');
edges('D H', [84], 'l r thick');
edges('D H', [85], 'l r double');
put('B65', '', 'left', 7);
[66, 67, 68].forEach(row => put('B' + row, '', 'left', 5));
put('B90', 'AVERAGE COST', 'heading under', 7);
put('B91', 'Total goods available for sale', 'times left', 3);
put('B92', 'Total units available', 'times left');
put('B93', 'Average cost*', 'times left');
edges('F', [91], 't l r b');
edges('F', [92], 'l r thick');
edges('F', [93], 'l r double');

// weighted average table
put('P53', 'Perpetual Inventory System', 'system edge b', 10);
put('P54', 'WEIGHTED AVERAGE', 'system edge b', 10);
const all = 'P Q R S T U V W X Y';
edges(all, [55, 56, 58, 59, 60, 61, 62, 63, 64, 65, 66, 67], 'l r b');
edges('P Q R S T U V Y', [57], 'l r b');
edges('W', [57], 'l b');
edges('X', [57], 'r b');
put('Q55', 'Purchases', 'small');
put('T55', 'Sales', 'small');
put('W55', 'Balance', 'small');
const heads = ['Date', 'Units', 'Cost Per unit', 'Total Cost', 'Units', 'Cost Per unit', 'Total Cost', 'Units', 'Cost Per unit', 'Total Cost'];
all.split(' ').forEach((col, i) => put(col + 56, heads[i], 'low'));
put('T68', 'Cost of Goods Sold', 'left', 2);
put('W68', 'Ending inventory', 'left');
edges('T V W Y', [69], 'double');

const grid = document.getElementById('grid');

const group = document.createElement('colgroup');
[40, ...columns.map(c => c[1])].forEach(width => {
    const col = document.createElement('col');
    col.style.width = width + 'px';
    group.appendChild(col);
});
grid.appendChild(group);

const headRow = grid.createTHead().insertRow();
['', ...columns.map(c => c[0])].forEach((name, i) => {
    const th = document.createElement('th');
    th.textContent = name;
    if (i === 0) th.className = 'corner';
    if (i >= 2 && i <= 10) th.className = 'sel';
    headRow.appendChild(th);
});

const body = grid.createTBody();
function addRow(label, height) {
    const tr = body.insertRow();
    tr.style.height = height + 'px';
    if (height === 60) tr.className = 'tall-row';
    if (height === 36 || height === 38) tr.className = 'title-row';
    const th = document.createElement('th');
    th.textContent = label;
    tr.appendChild(th);
    for (let c = 0; c < columns.length;) {
        const data = cells[columns[c][0] + label];
        const td = tr.insertCell();
        if (data) {
            td.textContent = data.text;
            td.className = data.cls.join(' ');
            td.colSpan = data.span;
        }
        c += data ? data.span : 1;
    }
}
rowHeights.forEach((height, i) => addRow(firstRow + i, height));
// the next row only peeks out above the sheet tabs
addRow('', 26);
```
